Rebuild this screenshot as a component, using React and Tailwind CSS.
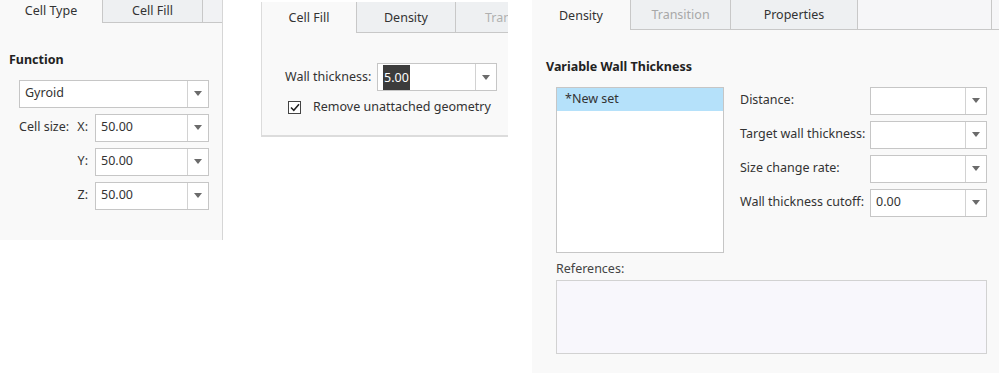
import React from "react";

const FONT = { fontFamily: '"Noto Sans", "Open Sans", Arial, sans-serif' };

function Arrow() {
  return (
    <svg width="8" height="5" viewBox="0 0 8 5">
      <path d="M0 0 L8 0 L4 5 Z" fill="#6b6b6b" />
    </svg>
  );
}

function Dropdown({ w, value, selected }) {
  return (
    <div className={`flex h-[28px] shrink-0 ${w} border border-[#c6c6c6] bg-white`}>
      <div className="flex flex-1 items-center whitespace-nowrap pl-[5px] text-[12.5px] text-[#333]">
        {selected ? (
          <span className="bg-[#3c3c3c] px-[1px] leading-[25px] text-white">{value}</span>
        ) : (
          <span>{value}</span>
        )}
      </div>
      <div className="flex w-[21px] items-center justify-center border-l border-[#d2d2d2]">
        <Arrow />
      </div>
    </div>
  );
}

function Tab({ label, w, active, disabled, h, pt = "" }) {
  return (
    <div
      className={`flex shrink-0 items-center justify-center whitespace-nowrap border-r border-[#c8c8c8] text-[12.5px] ${pt} ${w} ${h} ${
        active ? "bg-[#f9f9f9]" : "border-b bg-[#eef0f2]"
      } ${disabled ? "text-[#a8a8a8]" : "text-[#333]"}`}
    >
      {label}
    </div>
  );
}

function Panel1() {
  return (
    <div className="flex h-[240px] w-[223px] shrink-0 flex-col border-r border-[#d6d6d6] bg-[#f9f9f9]">
      <div className="flex">
        <Tab label="Cell Type" w="w-[103px]" h="h-[23px]" active />
        <Tab label="Cell Fill" w="w-[100px]" h="h-[23px]" />
        <div className="h-[23px] flex-1 border-b border-[#c8c8c8] bg-[#f1f2f4]" />
      </div>
      <div className="pl-[9px] pt-[28px] text-[12.5px] font-bold text-[#222]">Function</div>
      <div className="flex flex-col gap-[6px] pl-[19px] pt-[10px] text-[12.5px] text-[#333]">
        <Dropdown w="w-[190px]" value="Gyroid" />
        <div className="flex items-center">
          <div className="flex w-[76px] justify-between whitespace-nowrap pr-[7px]">
            <span>Cell size:</span>
            <span>X:</span>
          </div>
          <Dropdown w="w-[114px]" value="50.00" />
        </div>
        <div className="flex items-center">
          <div className="flex w-[76px] justify-end pr-[7px]">
            <span>Y:</span>
          </div>
          <Dropdown w="w-[114px]" value="50.00" />
        </div>
        <div className="flex items-center">
          <div className="flex w-[76px] justify-end pr-[7px]">
            <span>Z:</span>
          </div>
          <Dropdown w="w-[114px]" value="50.00" />
        </div>
      </div>
    </div>
  );
}

function Panel2() {
  return (
    <div className="ml-[38px] mt-[2px] flex h-[135px] w-[247px] shrink-0 flex-col overflow-hidden border-b-2 border-l border-[#dcdcdc] bg-[#f9f9f9]">
      <div className="flex">
        <Tab label="Cell Fill" w="w-[95px]" h="h-[31px]" pt="pt-[2px]" active />
        <Tab label="Density" w="w-[99px]" h="h-[31px]" pt="pt-[2px]" />
        <div className="flex h-[31px] w-[100px] shrink-0 items-center whitespace-nowrap border-b border-[#c8c8c8] bg-[#eef0f2] pl-[29px] pt-[2px] text-[12.5px] text-[#b0b0b0]">
          Transition
        </div>
      </div>
      <div className="flex items-center whitespace-nowrap pl-[23px] pt-[30px] text-[12.5px] text-[#333]">
        <span className="w-[92px]">Wall thickness:</span>
        <Dropdown w="w-[120px]" value="5.00" selected />
      </div>
      <div className="flex items-center whitespace-nowrap pl-[26px] pt-[7px] text-[12.5px] text-[#333]">
        <div className="flex h-[13px] w-[13px] items-center justify-center border border-[#444] bg-white">
          <svg width="10" height="9" viewBox="0 0 10 9">
            <path d="M1 4.5 L3.8 7.3 L9 1.2" fill="none" stroke="#222" strokeWidth="1.5" />
          </svg>
        </div>
        <span className="pl-[12px]">Remove unattached geometry</span>
      </div>
    </div>
  );
}

function Panel3() {
  const rows = [
    ["Distance:", ""],
    ["Target wall thickness:", ""],
    ["Size change rate:", ""],
    ["Wall thickness cutoff:", "0.00"],
  ];
  return (
    <div className="ml-[24px] flex h-[373px] flex-1 flex-col bg-[#f9f9f9]">
      <div className="flex">
        <Tab label="Density" w="w-[99px]" h="h-[30px]" pt="pt-[2px]" active />
        <Tab label="Transition" w="w-[100px]" h="h-[30px]" pt="pt-[2px]" disabled />
        <Tab label="Properties" w="w-[127px]" h="h-[30px]" pt="pt-[2px]" />
        <div className="h-[30px] w-[134px] shrink-0 border-b border-r border-[#c8c8c8] bg-[#f6f6f8]" />
        <div className="h-[30px] flex-1 border-b border-[#c8c8c8] bg-[#f6f6f8]" />
      </div>
      <div className="pl-[14px] pt-[28px] text-[12.5px] font-bold text-[#222]">Variable Wall Thickness</div>
      <div className="flex pl-[24px] pt-[10px] text-[12.5px] text-[#333]">
        <div className="h-[166px] w-[168px] shrink-0 border border-[#c6c6c6] bg-white">
          <div className="flex h-[23px] items-center bg-[#b5e1fa] pl-[8px]">*New set</div>
        </div>
        <div className="flex flex-col gap-[6px] pl-[16px]">
          {rows.map(([label, value]) => (
            <div key={label} className="flex items-center">
              <span className="w-[130px] whitespace-nowrap">{label}</span>
              <Dropdown w="w-[117px]" value={value} />
            </div>
          ))}
        </div>
      </div>
      <div className="pl-[24px] pt-[7px] text-[12.5px] text-[#444]">References:</div>
      <div className="ml-[24px] mt-[1px] h-[74px] w-[431px] border border-[#d2d2d2] bg-[#f8f7fc]" />
    </div>
  );
}

export default function App() {
  return (
    <div className="flex h-[373px] w-[999px] items-start overflow-hidden bg-white" style={FONT}>
      <Panel1 />
      <Panel2 />
      <Panel3 />
    </div>
  );
}
